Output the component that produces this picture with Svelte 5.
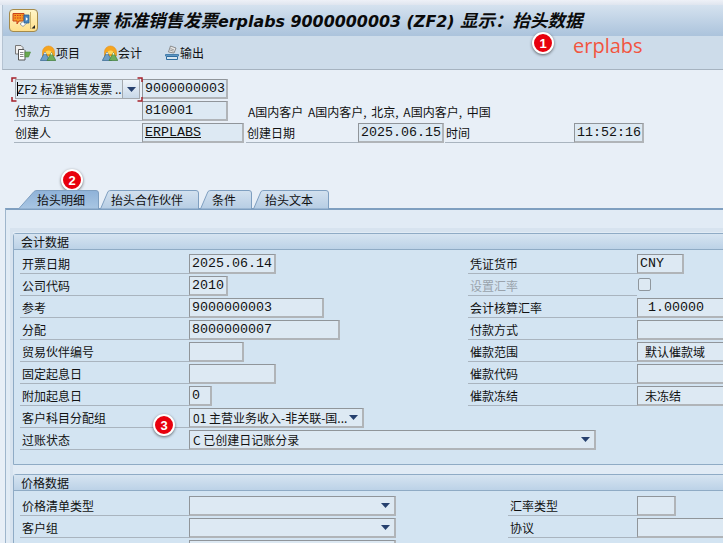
<script>
  const tabs = [
    { label: '抬头明细', w: 81, pad: 19, active: true },
    { label: '抬头合作伙伴', w: 99, pad: 11 },
    { label: '条件', w: 52, pad: 12 },
    { label: '抬头文本', w: 76, pad: 12 }
  ];
  const tabPath = (t) => {
    const slant = t.active ? 17 : 9;
    return `M0.5 19 L${slant - 1} 1.5 Q${slant} 0.5 ${slant + 2} 0.5 L${t.w - 3} 0.5 Q${t.w - 0.5} 0.5 ${t.w - 0.5} 3 L${t.w - 0.5} 19 Z`;
  };
  const left = [
    { label: '开票日期', w: 87, value: '2025.06.14' },
    { label: '公司代码', w: 39, value: '2010' },
    { label: '参考', w: 135, value: '9000000003' },
    { label: '分配', w: 151, value: '8000000007' },
    { label: '贸易伙伴编号', w: 55, value: '' },
    { label: '固定起息日', w: 87, value: '' },
    { label: '附加起息日', w: 23, value: '0' },
    { label: '客户科目分配组', w: 175, value: '01 主营业务收入-非关联-国...', select: true },
    { label: '过账状态', w: 407, value: 'C 已创建日记账分录', select: true }
  ];
  const right = [
    { label: '凭证货币', w: 47, value: 'CNY' },
    { label: '设置汇率', check: true, muted: true },
    { label: '会计核算汇率', w: 120, value: ' 1.00000' },
    { label: '付款方式', w: 120, value: '' },
    { label: '催款范围', w: 120, value: '默认催款域', cjk: true },
    { label: '催款代码', w: 120, value: '' },
    { label: '催款冻结', w: 120, value: '未冻结', cjk: true }
  ];
</script>

{#snippet arrow()}
  <svg class="arrow" width="9" height="5" viewBox="0 0 9 5"><path d="M0 0H9L4.500 5Z" fill="#26406e" /></svg>
{/snippet}

{#snippet mountains()}
  <svg class="tool-icon" width="16" height="16" viewBox="0 0 16 16">
    <path d="M2.500 11V7A5.800 5.800 0 0 1 14.500 7V11Z" fill="#f6a51f" stroke="#e58e14" stroke-width=".6" />
    <path d="M5 9A3.500 3.500 0 0 1 12 9Z" fill="#ffd65a" />
    <path d="M0.300 15.500L5 7 9.500 15.500Z" fill="#6f9fc6" stroke="#37668f" stroke-width=".7" />
    <path d="M7 15.500L11.500 7.500 15.800 15.500Z" fill="#70ad5b" stroke="#3d7b3a" stroke-width=".7" />
    <path d="M4 9L5 7 6 9ZM10.500 9.500L11.500 7.500 12.600 9.500Z" fill="#fff" />
  </svg>
{/snippet}

{#snippet row(r)}
  <div class="row">
    <span class="label" class:muted={r.muted}>{r.label}</span>
    {#if r.check}
      <span class="check"></span>
    {:else if r.select}
      <span class="field select" style:width="{r.w}px"><span class="sel-text">{r.value}</span>{@render arrow()}</span>
    {:else}
      <span class="field" class:cjk={r.cjk} style:width="{r.w}px">{r.value}</span>
    {/if}
  </div>
{/snippet}

<div class="screen">
  <div class="topband"></div>

  <header class="title">
    <div class="sysbtn">
      <svg width="27" height="21" viewBox="0 0 27 21">
        <path d="M3 3.500H14V11H9L7 14V11H3Z" fill="#f59a23" stroke="#c8441a" />
        <path d="M4.500 5.500H12.500M4.500 8H12.500" stroke="#d63a1a" stroke-dasharray="1.500 1" />
        <path d="M10 14L16 9 18.500 11.500 13 16.500Z" fill="#fff" stroke="#7d8a96" stroke-width=".8" />
        <path d="M14 5H19V13H14Z" fill="#4a86bd" stroke="#2d5f8f" stroke-width=".8" />
        <path d="M15.800 7L18 9 15.800 11Z" fill="#fff" />
        <path d="M20.500 2V19" stroke="#c9b26d" />
        <path d="M25 15V18.500H21.500Z" fill="#222" />
      </svg>
    </div>
    <h1><span class="cn">开票 标准销售发票</span>erplabs 9000000003 (ZF2) <span class="cn">显示：抬头数据</span></h1>
  </header>

  <nav class="toolbar">
    <svg class="doc-icon" width="17" height="17" viewBox="0 0 17 17">
      <path d="M1.500 1.500H7L9 3.500V10H1.500Z" fill="#eee" stroke="#777" />
      <path d="M4.500 5.500H10L11 6.500V16H4.500Z" fill="#fff" stroke="#555" />
      <path d="M6 8.500H9.500M6 10.500H9.500M6 12.500H9.500" stroke="#888" />
      <path d="M11 8H16.500L14.500 13H11Z" fill="#6aa84f" stroke="#4c8a3a" stroke-width=".6" />
    </svg>
    <button class="tool first">{@render mountains()}项目</button>
    <button class="tool second">{@render mountains()}会计</button>
    <button class="tool third">
      <svg class="tool-icon" width="16" height="16" viewBox="0 0 16 16">
        <path d="M4.500 7L6.500 1 12 3 10 8Z" fill="#e8e8e8" stroke="#777" stroke-width=".8" />
        <path d="M6.500 3.500L10 5M6 5L9.500 6.300" stroke="#888" stroke-width=".8" />
        <path d="M1.500 9.500H14.500V11H1.500Z" fill="#7fb2d8" stroke="#2f6c9f" stroke-width=".8" />
        <path d="M2.500 11.500H13.500V14.500H2.500Z" fill="#d8e6f0" stroke="#2f6c9f" />
      </svg>
      输出
    </button>
  </nav>

  <section class="head">
    <div class="hrow">
      <div class="dropdown">
        <svg class="brackets" width="132" height="25" viewBox="0 0 132 25">
          <path d="M5.500 1H1V5M1 20V24H5.500M126.500 1H131V5M131 20V24H126.500" fill="none" stroke="#a5202a" stroke-width="1.500" />
        </svg>
        <i class="cursor"></i>
        <span class="dd-text">ZF2 标准销售发票 ..</span>
        <span class="dd-btn">{@render arrow()}</span>
      </div>
      <span class="field w86">9000000003</span>
    </div>
    <div class="hrow">
      <span class="label hl">付款方</span>
      <span class="field w86">810001</span>
      <span class="desc">A国内客户 A国内客户, 北京, A国内客户, 中国</span>
    </div>
    <div class="hrow">
      <span class="label hl">创建人</span>
      <span class="field w102 link">ERPLABS</span>
      <span class="label hd">创建日期</span>
      <span class="field w86">2025.06.15</span>
      <span class="label ht">时间</span>
      <span class="field w70">11:52:16</span>
    </div>
  </section>

  <div class="tabs">
    <svg class="defs" width="0" height="0">
      <defs>
        <linearGradient id="tab-on" x1="0" y1="0" x2="0" y2="1"><stop offset="0" stop-color="#8fb2d8" /><stop offset="1" stop-color="#a9c6e3" /></linearGradient>
        <linearGradient id="tab-off" x1="0" y1="0" x2="0" y2="1"><stop offset="0" stop-color="#d3e1ef" /><stop offset="1" stop-color="#b6cde4" /></linearGradient>
      </defs>
    </svg>
    {#each tabs as t}
      <div class="tab" style:width="{t.w}px" style:padding-left="{t.pad}px">
        <svg class="tab-bg" width={t.w} height="19">
          <path d={tabPath(t)} fill={t.active ? 'url(#tab-on)' : 'url(#tab-off)'} stroke="#7f9fc0" />
        </svg>
        <span>{t.label}</span>
      </div>
    {/each}
  </div>

  <main class="panel">
    <div class="inner">
      <div class="group">
        <div class="ghead">会计数据</div>
        <div class="gbody first-body">
          <div class="col">{#each left as r}{@render row(r)}{/each}</div>
          <div class="col">{#each right as r}{@render row(r)}{/each}</div>
        </div>
      </div>

      <div class="group second-group">
        <div class="ghead">价格数据</div>
        <div class="gbody second-body">
          <div class="col">
            <div class="row"><span class="label">价格清单类型</span><span class="field select w207">{@render arrow()}</span></div>
            <div class="row"><span class="label">客户组</span><span class="field select w207">{@render arrow()}</span></div>
            <div class="row"><span class="label"></span><span class="field w207"></span></div>
          </div>
          <div class="col">
            <div class="row"><span class="label narrow">汇率类型</span><span class="field w39"></span></div>
            <div class="row"><span class="label narrow">协议</span><span class="field w120"></span></div>
          </div>
        </div>
      </div>
    </div>
  </main>

  <span class="badge b1">1</span>
  <span class="brand">erplabs</span>
  <span class="badge b2">2</span>
  <span class="badge b3">3</span>
</div>

<style>
  :global(body) { margin: 0; }
  .screen {
    position: relative;
    width: 723px;
    height: 543px;
    overflow: hidden;
    background: #e8eff7;
    font: 12px/1 "Noto Sans CJK SC", "Liberation Sans", sans-serif;
    color: #111;
  }
  .topband { height: 5px; background: linear-gradient(#eef1f7, #dfe5ef); }
  .title {
    display: flex;
    align-items: center;
    height: 31px;
    margin-left: 2px;
    background: linear-gradient(#d5e2ef, #abc3dc);
    border-left: 1px solid #b5c3d2;
  }
  .sysbtn {
    display: flex;
    width: 27px;
    height: 21px;
    margin-left: 7px;
    border-radius: 3px;
    outline: 1px solid #a58a4a;
    background: linear-gradient(#fff6c8, #ffdf8a);
  }
  h1 {
    margin: 0 0 0 37px;
    font: italic 700 15.900px/1 "DejaVu Sans", "Noto Sans CJK SC", sans-serif;
    color: #0a0a0a;
    white-space: nowrap;
  }
  .cn { font-size: 17.500px; font-family: "Noto Sans CJK SC", sans-serif; }
  .toolbar {
    display: flex;
    align-items: center;
    height: 33px;
    margin-left: 2px;
    padding-left: 11px;
    background: #cddcea;
    border-bottom: 1px solid #a6b3c0;
    border-left: 1px solid #b5c3d2;
  }
  .doc-icon { display: block; }
  .tool {
    display: flex;
    align-items: center;
    padding: 0;
    border: 0;
    background: none;
    font: 12px/1 "Noto Sans CJK SC", sans-serif;
    color: #111;
  }
  .tool.first { margin-left: 9px; }
  .tool.second { margin-left: 22px; }
  .tool.third { margin-left: 22px; }

  .head { padding: 9px 0 0 14px; }
  .hrow { display: flex; height: 20px; margin-bottom: 2px; }
  .label {
    box-sizing: border-box;
    flex: none;
    width: 169px;
    height: 20px;
    padding: 4px 0 0 2px;
    border-bottom: 1px solid #a9b4bf;
    white-space: nowrap;
  }
  .muted { color: #9aa3ac; }
  .hl { width: 128px; padding-left: 1px; }
  .hd { width: 112px; margin-left: 2px; padding-left: 1px; }
  .ht { width: 129px; margin-left: 1px; padding-left: 1px; }
  .desc { margin-left: 20px; padding-top: 5px; white-space: nowrap; word-spacing: 2px; }
  .field {
    box-sizing: border-box;
    flex: none;
    height: 20px;
    padding: 1px 0 0 2px;
    border-style: solid;
    border-width: 1px 2px 2px 1px;
    border-color: #90959a #b0b4b8 #b0b4b8 #90959a;
    background: #dde9f3;
    font: 13.330px/15px "Liberation Mono", monospace;
    white-space: pre;
    overflow: hidden;
  }
  .cjk { font: 12px/15px "Noto Sans CJK SC", sans-serif; padding-left: 7px; }
  .w86 { width: 86px; }
  .w102 { width: 102px; }
  .w70 { width: 70px; }
  .w207 { width: 207px; }
  .w39 { width: 39px; }
  .w120 { width: 120px; }
  .link { text-decoration: underline; }

  .dropdown {
    position: relative;
    box-sizing: border-box;
    display: flex;
    align-items: center;
    flex: none;
    width: 125px;
    height: 20px;
    margin: 0 2px 0 1px;
    padding-left: 1px;
    border: 1px solid #a4a9ae;
    background: #dde9f3;
  }
  .brackets { position: absolute; left: -5px; top: -3px; }
  .cursor { position: absolute; left: 1px; top: 2px; width: 1px; height: 14px; background: #000; }
  .dd-text { white-space: nowrap; font-size: 12px; }
  .dd-btn {
    position: absolute;
    right: 0;
    top: 0;
    bottom: 0;
    width: 16px;
    display: flex;
    align-items: center;
    justify-content: center;
    background: linear-gradient(#eef4fa, #c8d8e8);
    border-left: 1px solid #a4a9ae;
  }

  .tabs { display: flex; gap: 1px; height: 19px; margin: 47px 0 -1px 18px; position: relative; z-index: 1; }
  .defs { position: absolute; }
  .tab { position: relative; box-sizing: border-box; flex: none; height: 19px; padding-top: 4px; }
  .tab span { position: relative; }
  .tab-bg { position: absolute; left: 0; top: 0; }

  .panel {
    box-sizing: border-box;
    height: 340px;
    margin-left: 5px;
    padding: 18px 0 0 4px;
    border-top: 2px solid #7f9fc0;
    border-left: 1px solid #9fb6cc;
    background: #e1ebf5;
  }
  .inner {
    height: 100%;
    box-sizing: border-box;
    padding: 1px 0 0 0;
    border-style: solid;
    border-width: 4px 0 0 3px;
    border-color: #d7e3ef;
  }
  .group {
    width: 760px;
    box-sizing: border-box;
    border: 1px solid #8fabc5;
    border-radius: 3px 3px 0 0;
    background: #d3e4f2;
  }
  .second-group { margin-top: 9px; }
  .ghead {
    box-sizing: border-box;
    height: 16px;
    padding: 2px 0 0 7px;
    background: linear-gradient(#d6e4f1, #bcd2e7);
    border-bottom: 1px solid #8fabc5;
  }
  .gbody { display: flex; box-sizing: border-box; padding: 4px 0 0 6px; }
  .first-body { height: 214px; }
  .second-body { padding-top: 5px; }
  .col { flex: none; width: 448px; }
  .row { display: flex; height: 20px; margin-bottom: 2px; }
  .narrow { width: 129px; margin-left: 40px; }
  .check {
    box-sizing: border-box;
    width: 13px;
    height: 13px;
    margin: 2px 0 0 1px;
    border: 1px solid #8f979e;
    border-radius: 2px;
    background: #dde9f3;
  }
  .select {
    position: relative;
    display: flex;
    align-items: center;
    font: 12px/15px "Noto Sans CJK SC", sans-serif;
    padding: 0 0 0 3px;
  }
  .sel-text { white-space: nowrap; }
  .arrow { display: block; flex: none; }
  .select .arrow { position: absolute; right: 4px; top: 6px; }

  .badge {
    position: absolute;
    box-sizing: border-box;
    display: flex;
    align-items: center;
    justify-content: center;
    width: 22px;
    height: 22px;
    border: 2px solid #fff;
    border-radius: 50%;
    background: #e8000d;
    box-shadow: 0 1px 3px rgba(0, 0, 0, .55);
    color: #fff;
    font: 700 13px/1 "Liberation Sans", sans-serif;
  }
  .b1 { left: 532px; top: 32px; }
  .b2 { left: 61px; top: 169px; }
  .b3 { left: 153px; top: 414px; }
  .brand {
    position: absolute;
    left: 573px;
    top: 34px;
    color: #f2553f;
    font: 20px/1.200 "Open Sans", sans-serif;
  }
</style>
